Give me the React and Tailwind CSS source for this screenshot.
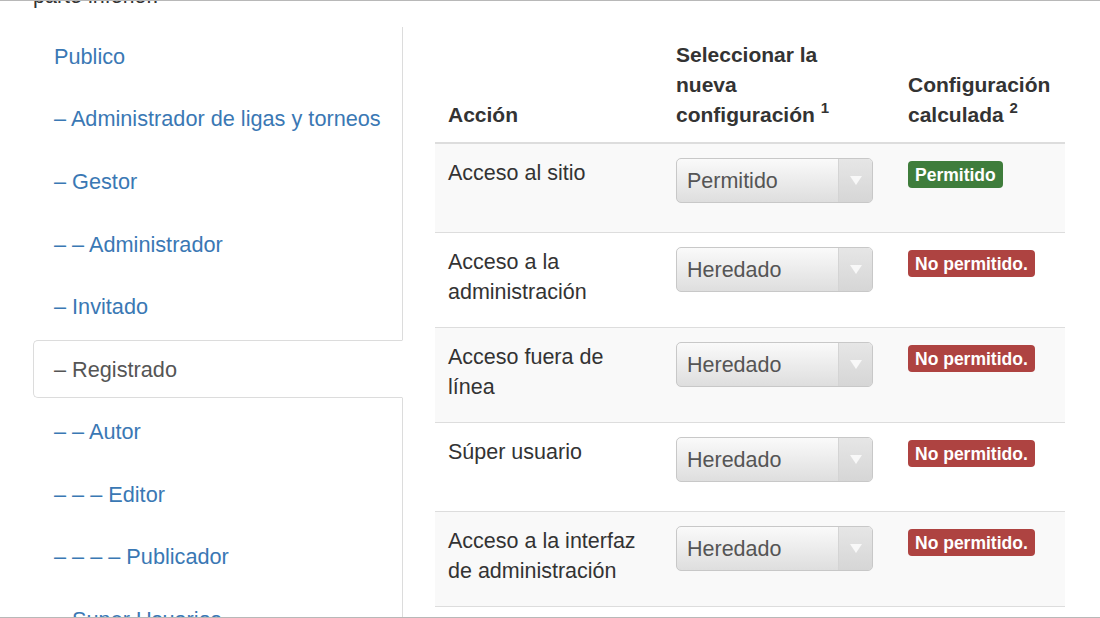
import React from "react";

const navItems = [
  { label: "Publico" },
  { label: "– Administrador de ligas y torneos" },
  { label: "– Gestor" },
  { label: "– – Administrador" },
  { label: "– Invitado" },
  { label: "– Registrado", active: true },
  { label: "– – Autor" },
  { label: "– – – Editor" },
  { label: "– – – – Publicador" },
  { label: "– Super Usuarios" },
];

const rows = [
  { action: ["Acceso al sitio"], value: "Permitido", allowed: true },
  { action: ["Acceso a la", "administración"], value: "Heredado", allowed: false },
  { action: ["Acceso fuera de", "línea"], value: "Heredado", allowed: false },
  { action: ["Súper usuario"], value: "Heredado", allowed: false },
  { action: ["Acceso a la interfaz", "de administración"], value: "Heredado", allowed: false },
];

function Select({ value }) {
  return (
    <div className="flex h-[45px] w-[197px] mb-[9px] rounded-[5px] border border-[#c8c8c8] bg-gradient-to-b from-[#fafafa] via-[#ececec] to-[#dedede] overflow-hidden">
      <div className="flex-1 flex items-center pl-[10px] text-[#555] text-[21.5px]">{value}</div>
      <div className="w-[34px] flex items-center justify-center border-l border-[#d4d4d4] bg-gradient-to-b from-[#e6e6e6] to-[#d6d6d6]">
        <div className="w-0 h-0 border-l-[6px] border-r-[6px] border-t-[9px] border-l-transparent border-r-transparent border-t-[#f8f8f8]" />
      </div>
    </div>
  );
}

function Badge({ allowed }) {
  return allowed ? (
    <span className="inline-flex items-center h-[27px] px-[7px] rounded-[4px] bg-[#3f7d3c] text-white font-bold text-[17.5px] mt-[3px]">
      Permitido
    </span>
  ) : (
    <span className="inline-flex items-center h-[27px] px-[7px] rounded-[4px] bg-[#ae4341] text-white font-bold text-[17.5px] mt-[3px]">
      No permitido.
    </span>
  );
}

export default function App() {
  return (
    <div
      className="w-[1100px] h-[618px] overflow-hidden bg-white border-t border-b border-[#b8b8b8] text-[#333]"
      style={{ fontFamily: '"Liberation Sans", Arial, sans-serif' }}
    >
      <div className="pl-[33px] mt-[-20px] text-[21.5px] leading-[30px] text-[#333]">parte inferior.</div>
      <div className="flex pl-[33px] mt-[16px] gap-[32px]">
        {/* Nav */}
        <ul className="w-[370px] border-r border-[#dcdcdc] shrink-0">
          {navItems.map((it, i) => (
            <li key={i} className={"mb-[4.6px] " + (it.active ? "mr-[-1px]" : "")}>
              <div
                className={
                  "h-[58px] flex items-center pl-[20px] pt-[2px] text-[21.7px] rounded-l-[5px] border " +
                  (it.active
                    ? "border-[#dcdcdc] border-r-white bg-white text-[#555]"
                    : "border-transparent text-[#3a78b4]")
                }
              >
                {it.label}
              </div>
            </li>
          ))}
        </ul>
        {/* Table */}
        <div className="w-[630px] shrink-0">
          <div className="grid grid-cols-[228px_232px_170px] border-b-2 border-[#dddddd] font-bold text-[21px] leading-[30px] text-[#333]">
            <div className="px-[13px] pt-[13px] pb-[12px] flex items-end">Acción</div>
            <div className="px-[13px] pt-[13px] pb-[12px] flex items-end">
              <div>
                Seleccionar la
                <br />
                nueva
                <br />
                configuración <sup className="text-[15px] top-[-9px]">1</sup>
              </div>
            </div>
            <div className="px-[13px] pt-[13px] pb-[12px] flex items-end">
              <div>
                Configuración
                <br />
                calculada <sup className="text-[15px] top-[-9px]">2</sup>
              </div>
            </div>
          </div>
          {rows.map((r, i) => (
            <div
              key={i}
              className={
                "grid grid-cols-[228px_232px_170px] text-[21.5px] leading-[30px] " +
                (i > 0 ? "border-t border-[#dddddd] " : "") +
                (i % 2 === 0 ? "bg-[#f9f9f9]" : "bg-white")
              }
            >
              <div className="px-[13px] pt-[14px] pb-[20px]">
                {r.action.map((l, j) => (
                  <div key={j}>{l}</div>
                ))}
              </div>
              <div className="px-[13px] pt-[14px] pb-[20px]">
                <Select value={r.value} />
              </div>
              <div className="px-[13px] pt-[14px] pb-[20px]">
                <Badge allowed={r.allowed} />
              </div>
            </div>
          ))}
          <div className="border-t border-[#dddddd]" />
        </div>
      </div>
    </div>
  );
}
